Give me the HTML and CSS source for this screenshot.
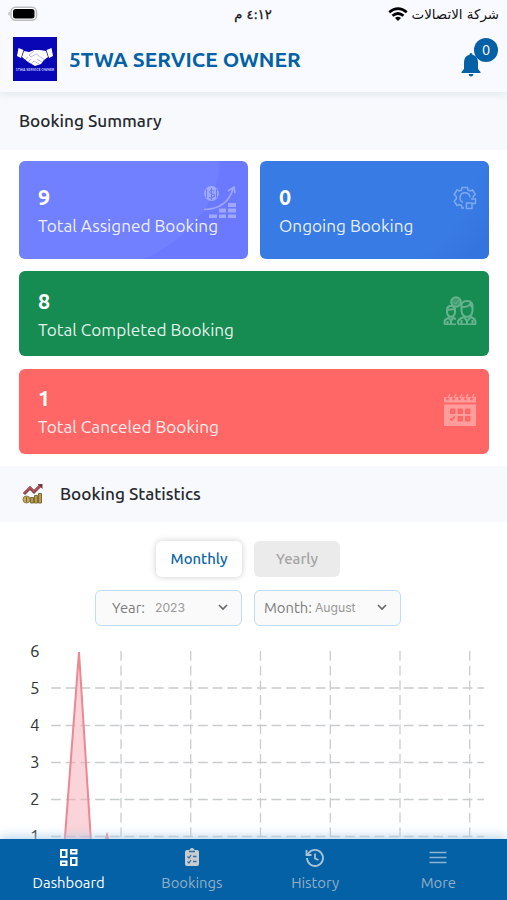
FILE: index.html
```html
<!DOCTYPE html>
<html lang="en">

<head>
  <meta charset="UTF-8">
  <meta name="viewport" content="width=device-width, initial-scale=1.0">
  <title>5TWA Service Owner</title>
  <link rel="stylesheet" href="styles.css">
</head>

<body>
  <header class="header">
    <div class="status-bar">
      <svg class="battery" width="32" height="16" viewBox="0 0 32 16">
        <rect x="4" y="1.200" width="25.500" height="13" rx="4.500" fill="#fff" stroke="#bcbcbc" stroke-width="1.500" />
        <rect x="6" y="3" width="21.500" height="9.500" rx="2.500" fill="#000" />
        <path d="M2.500 5.500Q0 7.700 2.500 10Z" fill="#aaa" />
      </svg>
      <span class="time" dir="rtl">٤:١٢ م</span>
      <div class="carrier">
        <svg width="20" height="15" viewBox="0 0 20 15" fill="none" stroke="#000" stroke-width="2.700">
          <path d="M1.200 5.200Q10 -2 18.800 5.200M4.500 8.800Q10 4.200 15.500 8.800" />
          <path d="M10 14L7 11Q10 8.700 13 11Z" fill="#000" stroke="none" />
        </svg>
        <span dir="rtl">شركة الاتصالات</span>
      </div>
    </div>
    <div class="app-bar">
      <div class="logo">
        <svg width="36" height="20" viewBox="0 0 36 20">
          <path d="M1.500 1L6.500 3L4 11L0 9ZM34.500 1L29.500 3L32 11L36 9Z" fill="#fff" />
          <path d="M7 4L12 5L17 3L23 3L29 4L31 10L27 13L24 17L18 19L11 15L5 10Z" fill="#fff" />
          <path d="M17 4L12 8L14 10L19 7L28 13M20 12L25 15M17 14L22 17M8 13L11 10M11 15L14 12M14 17L17 14" fill="none" stroke="#8d94d8" stroke-width=".6" />
        </svg>
        <span class="logo-text">5TWA SERVICE OWNER</span>
      </div>
      <h1 class="app-title">5TWA SERVICE OWNER</h1>
      <div class="bell">
        <svg width="20" height="24" viewBox="0 0 20 24" fill="#0461a5">
          <path d="M10 0Q11.500 0 11.500 1.800Q17 3.300 17 9V16L19.500 19V20H.5V19L3 16V9Q3 3.300 8.500 1.800Q8.500 0 10 0Z" />
          <path d="M7.500 21H12.500Q12 23.500 10 23.500T7.500 21Z" />
        </svg>
        <span class="badge">0</span>
      </div>
    </div>
  </header>

  <section class="section-heading summary-heading">
    <h2>Booking Summary</h2>
  </section>

  <main>
    <div class="cards">
      <div class="card assigned">
        <strong>9</strong>
        <span>Total Assigned Booking</span>
        <svg class="card-icon" width="34" height="34" viewBox="0 0 34 34">
          <ellipse cx="8.500" cy="8.500" rx="7.300" ry="7.500" fill="#fff" />
          <path d="M11 6Q8.500 4 7 6T9.500 9T10 12T6 12M8.500 3V15M3.500 4V13M13.500 4V13" fill="none" stroke="#6d7cff" stroke-width="1.100" />
          <path d="M1 24.500Q24 24 30 4M25 6L31 2L32 8" fill="none" stroke="#fff" stroke-width="1.600" />
          <path d="M25 18h8v4h-8zM16 23.500h7v4h-7zM25 23.500h8v4h-8zM6 29.500h8v3.500H6zM16 29.500h7v3.500h-7zM25 29.500h8v3.500h-8z" fill="#fff" />
        </svg>
      </div>
      <div class="card ongoing">
        <strong>0</strong>
        <span>Ongoing Booking</span>
        <svg class="card-icon" width="24" height="24" viewBox="0 0 24 24" fill="none" stroke="#fff" stroke-width="1.500">
          <path d="M11 22H9L8.500 19.500L6.500 18.500L4 19.500L1.200 15L3.300 13V10.500L1.200 8.500L4 4L6.500 5L8.500 4L9 1.500H14.500L15 4L17 5L19.500 4L22.300 8.500L20.200 10.500V12" />
          <path d="M10 16.300A5 5 0 1 1 17 11.500M13.500 17h5.500v5.500h-5.500zM18 13h4.500v4.500H19" />
        </svg>
      </div>
      <div class="card completed">
        <strong>8</strong>
        <span>Total Completed Booking</span>
        <svg class="card-icon" width="34" height="30" viewBox="0 0 34 30" fill="none" stroke="#fff" stroke-width="2">
          <circle cx="13" cy="6" r="4.800" fill="#fff" fill-opacity=".5" />
          <path d="M10.500 6L12.500 8L16 4" stroke-width="1" />
          <path d="M4 16V14Q4 10 8 10T12 14V16Q12 20 8 21Q4 20 4 16ZM4 14L11 13M18.500 12Q17.500 5 24 5T29.500 12V15Q29 20 24 21Q19 20 18.500 15ZM19 11Q26 11 27 8L29.500 12" />
          <path d="M1.500 28V26Q1.500 23 6 22L8 25L10 22L13 23M4.500 25V28M8 25V28M15 28V26Q15 23 21 21L24 25L28 21Q32.500 23 32.500 26V28M18.500 24V28M24 25V28M29.500 24V28" />
          <path d="M1 28.200H13M15 28.200H33" stroke-width="1.500" />
        </svg>
      </div>
      <div class="card canceled">
        <strong>1</strong>
        <span>Total Canceled Booking</span>
        <svg class="card-icon" width="34" height="34" viewBox="0 0 34 34">
          <path d="M1 11.500H33V33H1ZM1 4H33V9.500H1Z" fill="#fff" />
          <path d="M4 7L6 2M10 7L12 2M16 7L18 2M22 7L24 2M28 7L30 2" stroke="#ff6767" stroke-width="2.500" />
          <path d="M5 5L7 1M11 5L13 1M17 5L19 1M23 5L25 1M29 5L31 1" stroke="#fff" stroke-width="1.500" />
          <path d="M7.500 16h4.500v4.500H7.500zM15 16h4.500v4.500H15zM22.500 16h4.500v4.500h-4.500zM15 23.500h4.500v4.500H15zM22.500 23.500h4.500v4.500h-4.500zM7 26L8.500 28L12 24L11 23.500L8.500 26Z" fill="#ff6767" stroke="#ff6767" />
          <path d="M9 18.300h2M16.500 18.300h2M24 18.300h2M16.500 26h2M24 26h2" stroke="#ff9c9c" />
        </svg>
      </div>
    </div>

    <section class="section-heading statistics-heading">
      <svg width="22" height="22" viewBox="0 0 22 22">
        <path d="M2 11L8 5L12 9L19 2" fill="none" stroke="#5d4347" stroke-width="3" />
        <path d="M2 10.500L8 4.500L12 8.500L19 2" fill="none" stroke="#b54c51" stroke-width="2" />
        <path d="M15.500 1H20.500V6Z" fill="#713a41" />
        <circle cx="4.500" cy="16.500" r="3.500" fill="#c8ab57" stroke="#8a794b" />
        <path d="M4.500 14V19" stroke="#75643a" />
        <path d="M8.500 14.500H11.500V20H8.500ZM12.500 12.500H15.500V20H12.500ZM16.500 10.500H19.500V20H16.500Z" fill="#b99b48" stroke="#7d6b3a" />
      </svg>
      <h2>Booking Statistics</h2>
    </section>

    <div class="tabs">
      <button class="tab active">Monthly</button>
      <button class="tab">Yearly</button>
    </div>
    <div class="filters">
      <button class="filter year">
        <span class="filter-label">Year:</span>
        <span class="filter-value">2023</span>
        <svg width="10" height="7" viewBox="0 0 10 7"><path d="M1 1L5 5L9 1" /></svg>
      </button>
      <button class="filter month">
        <span class="filter-label">Month:</span>
        <span class="filter-value">August</span>
        <svg width="10" height="7" viewBox="0 0 10 7"><path d="M1 1L5 5L9 1" /></svg>
      </button>
    </div>

    <!-- the chart runs on under the bottom nav -->
    <svg class="chart" width="507" height="214" viewBox="0 636 507 214">
      <g class="grid">
        <path d="M51 688H484M51 725.500H484M51 762.500H484M51 799.500H484M51 836.500H484" />
        <path d="M121 651V850M190.700 651V850M260.500 651V850M330.300 651V850M400 651V850M469.700 651V850" />
      </g>
      <g class="axis">
        <text x="30" y="657">6</text>
        <text x="30" y="694">5</text>
        <text x="30" y="731">4</text>
        <text x="30" y="768">3</text>
        <text x="30" y="805">2</text>
        <text x="30" y="842">1</text>
      </g>
      <path class="area" d="M64 850L79 652L91.500 850M102 850L107 835L112 850" />
    </svg>
  </main>

  <nav class="bottom-nav">
    <a class="nav-item selected">
      <svg width="20" height="20" viewBox="0 0 20 20" fill="none" stroke="#fff" stroke-width="2">
        <path d="M2 2h5.500v7H2zM12 2h5.500v3.500H12zM2 13.500h5.500v3.500H2zM12 10h5.500v7H12z" />
      </svg>
      <span>Dashboard</span>
    </a>
    <a class="nav-item">
      <svg width="20" height="20" viewBox="0 0 20 20">
        <path d="M5 2H7.500Q8 0 10 0T12.500 2H15Q17 2 17 4V16Q17 18 15 18H5Q3 18 3 16V4Q3 2 5 2Z" fill="#c9ccce" />
        <path d="M7 3.500h6M5.500 8.500L7 10L9 7M11 8.500h3.500M5.500 13.500L7 15L9 12M11 13.500h3.500" fill="none" stroke="#376f9e" stroke-width="1.300" />
      </svg>
      <span>Bookings</span>
    </a>
    <a class="nav-item">
      <svg width="20" height="20" viewBox="0 0 20 20" fill="none" stroke="#a9c3d7" stroke-width="1.800">
        <path d="M2 10A8 8 0 1 0 3.500 5.300L2 7M1.500 2V7H6.500M10 5.500V10.500L13.500 12" />
      </svg>
      <span>History</span>
    </a>
    <a class="nav-item">
      <svg width="20" height="20" viewBox="0 0 20 20" stroke="#8fb3d0" stroke-width="1.700">
        <path d="M1.500 4.500H18.500M1.500 9.500H18.500M1.500 14.500H18.500" />
      </svg>
      <span>More</span>
    </a>
  </nav>
</body>

</html>
```

FILE: styles.css
```css
* {
  box-sizing: border-box;
}

body {
  margin: 0;
  height: 900px;
  overflow: hidden;
  display: flex;
  flex-direction: column;
  font-family: Ubuntu, "Noto Sans", sans-serif;
  background-color: #fff;
  color: #25282d;
}

h1,
h2 {
  margin: 0;
}

button {
  font-family: inherit;
}

.header {
  height: 92px;
  flex: none;
  background-color: #f8faff;
  box-shadow: 0 2px 8px #dfe7ec;
  position: relative;
}

.status-bar {
  height: 28px;
  padding: 0 8px 0 7px;
  display: grid;
  grid-template-columns: 1fr auto 1fr;
  align-items: center;
  font-family: "DejaVu Sans", sans-serif;
  font-size: 13.4px;
  color: #111;
}

.time {
  font-size: 13px;
  -webkit-text-stroke: 0.3px #111;
}

.carrier {
  display: flex;
  justify-content: flex-end;
  align-items: center;
  gap: 4px;
}

.app-bar {
  height: 64px;
  display: flex;
  align-items: center;
  padding: 0 9px 2px 13px;
}

.logo {
  width: 44px;
  height: 44px;
  padding-top: 10px;
  background-color: #0806b5;
  display: flex;
  flex-direction: column;
  align-items: center;
  overflow: hidden;
}

.logo-text {
  font-size: 3.5px;
  line-height: 6px;
  font-weight: 700;
  color: #c6c9ff;
  white-space: nowrap;
}

.app-title {
  margin-left: 12px;
  font-size: 21px;
  line-height: 26px;
  font-weight: 700;
  color: #0461a5;
}

.bell {
  position: relative;
  width: 38px;
  height: 44px;
  margin-left: auto;
  padding: 16px 0 0 1px;
}

.badge {
  position: absolute;
  top: 1px;
  right: 0;
  width: 24px;
  height: 24px;
  border-radius: 50%;
  background-color: #0461a5;
  color: #fff;
  font-size: 14.5px;
  line-height: 24px;
  text-align: center;
}

.section-heading {
  display: flex;
  align-items: center;
  background-color: #f7f9fc;
}

.section-heading h2 {
  font-size: 17.2px;
  line-height: 24px;
  font-weight: 500;
}

.summary-heading {
  height: 58px;
  flex: none;
  padding: 0 19px;
}

main {
  flex: 1;
  min-height: 0;
}

.cards {
  display: grid;
  grid-template-columns: 1fr 1fr;
  grid-template-rows: 98px 85px 85px;
  gap: 12.3px 12px;
  padding: 11px 18px 12.4px 19px;
}

.card {
  position: relative;
  display: flex;
  flex-direction: column;
  justify-content: center;
  padding: 3px 19px 0;
  border-radius: 6px;
  color: #fff;
  overflow: hidden;
}

.card strong {
  font-size: 21.5px;
  line-height: 28px;
}

.card span {
  font-size: 17.2px;
  line-height: 29px;
  white-space: nowrap;
  color: #ffffffe6;
}

.assigned {
  background: radial-gradient(ellipse 161px 116px at 40px 0, #7180ff 99%, #6b79ff 100%);
}

.ongoing {
  background: radial-gradient(circle at 35% -20%, #397be4 140px, #3474df 175px);
}

.completed,
.canceled {
  grid-column: span 2;
}

.completed {
  background-color: #168b52;
}

.canceled {
  background-color: #ff6767;
}

.card-icon {
  position: absolute;
  top: 24px;
  right: 11px;
  opacity: .35;
}

.ongoing .card-icon {
  top: 25px;
  right: 12px;
}

.completed .card-icon {
  top: 25px;
  right: 12px;
}

.canceled .card-icon {
  right: 12px;
}

.statistics-heading {
  height: 56px;
  padding: 0 22px;
  gap: 16px;
}

.tabs {
  display: flex;
  gap: 12px;
  padding: 19px 0 0 156px;
}

.tab {
  width: 86px;
  height: 36px;
  padding: 0;
  border: none;
  border-radius: 6px;
  background-color: #ebebeb;
  color: #a4a4a4;
  font-size: 14.9px;
  font-weight: 500;
}

.tab.active {
  background-color: #fff;
  color: #0b65a9;
  box-shadow: 0 0 6px #ccc;
}

.filters {
  display: flex;
  gap: 12px;
  padding: 13px 0 0 95px;
}

.filter {
  width: 147px;
  height: 36px;
  display: flex;
  align-items: center;
  padding: 0 13px 0 16px;
  border: 1px solid #bddcf8;
  border-radius: 6px;
  background-color: #fafafa;
  color: #7c7c7c;
}

.filter-label {
  font-size: 14.8px;
}

.filter-value {
  margin-left: 10px;
  font-family: Inter, sans-serif;
  font-size: 12.2px;
  color: #999;
}

.filter svg {
  margin-left: auto;
  fill: none;
  stroke: #666;
  stroke-width: 1.6;
}

.month {
  padding-left: 9px;
}

.month .filter-value {
  margin-left: 3px;
}

.chart {
  display: block;
  margin-top: 10px;
}

.grid {
  fill: none;
  stroke: #c8cccd;
  stroke-width: 1.3;
  stroke-dasharray: 9.8 4.9;
}

.axis {
  font-size: 17px;
  fill: #333;
}

.area {
  fill: #f6a9b180;
  stroke: #ed8792;
  stroke-width: 2;
}

.bottom-nav {
  position: relative;
  height: 61px;
  flex: none;
  display: grid;
  grid-template-columns: repeat(4, 1fr);
  padding: 0 7px;
  background-color: #0461a5;
  box-shadow: 0 -1px 12px #abcce8;
}

.nav-item {
  display: flex;
  flex-direction: column;
  align-items: center;
  padding-top: 9px;
  gap: 5px;
  color: #91afc6;
  font-size: 14.8px;
  line-height: 20px;
}

.selected {
  color: #fff;
}
```
